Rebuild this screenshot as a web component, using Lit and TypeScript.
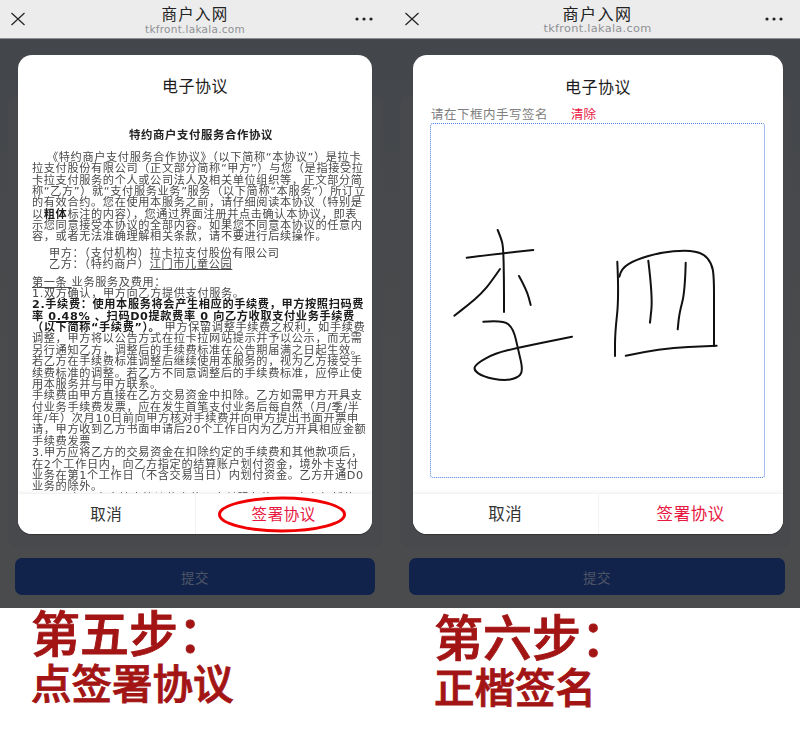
import { LitElement, html, css, svg } from "lit";
import { customElement } from "lit/decorators.js";

type Pt = [number, number];
const strokes: Pt[][] = [
  [[497.7, 230], [501, 238], [503.3, 247], [504, 280], [504, 312]],
  [[466.7, 257.7], [500, 253.5], [533.3, 250]],
  [[500, 269], [491, 282], [481.7, 293.3], [468, 305], [454.3, 315.7]],
  [[519, 276], [526.7, 290], [530.7, 305]],
  [[483.3, 321.7], [503.3, 320], [513.3, 328.3], [518.3, 350], [523.3, 371.7], [516.7, 378.3], [503.3, 380.7], [483.3, 376.7], [473.3, 370], [476.7, 363.3], [495, 353.3], [520, 347.3], [572, 336.7]],
  [[617.3, 261.7], [619, 296.7], [615, 333.3], [615, 356]],
  [[619.3, 276.7], [621, 268.3], [636.7, 259.3], [660, 252.7], [686.7, 250], [703.3, 253.3], [711.7, 263.3], [714, 276.7], [714, 310], [714, 346]],
  [[648.3, 260.7], [652.7, 296.7], [650, 322.7]],
  [[685.7, 262.7], [685, 291.7], [679.3, 313.3], [677.7, 329.3]],
  [[625.7, 355.7], [660, 348.3], [716.7, 345.7]],
];

function smooth(p: Pt[]): string {
  let d = `M${p[0][0]} ${p[0][1]}`;
  for (let i = 1; i < p.length - 1; i++) {
    const mx = (p[i][0] + p[i + 1][0]) / 2;
    const my = (p[i][1] + p[i + 1][1]) / 2;
    d += ` Q${p[i][0]} ${p[i][1]} ${mx} ${my}`;
  }
  const l = p[p.length - 1];
  return d + ` L${l[0]} ${l[1]}`;
}

const intro = [
  "拉支付股份有限公司（正文部分简称“甲方”）与您（是指接受拉",
  "卡拉支付服务的个人或公司法人及相关单位组织等，正文部分简",
  "称“乙方”）就“支付服务业务”服务（以下简称“本服务”）所订立",
  "的有效合约。您在使用本服务之前，请仔细阅读本协议（特别是",
];
const terms = [
  "调整，甲方将以公告方式在拉卡拉网站提示并予以公示，而无需",
  "另行通知乙方，调整后的手续费标准在公告期届满之日起生效。",
  "若乙方在手续费标准调整后继续使用本服务的，视为乙方接受手",
  "续费标准的调整。若乙方不同意调整后的手续费标准，应停止使",
  "用本服务并与甲方联系。",
  "手续费由甲方直接在乙方交易资金中扣除。乙方如需甲方开具支",
  "付业务手续费发票，应在发生首笔支付业务后每自然（月/季/半",
  "年/年）次月10日前向甲方核对手续费并向甲方提出书面开票申",
  "请，甲方收到乙方书面申请后20个工作日内为乙方开具相应金额",
  "手续费发票",
  "3.甲方应将乙方的交易资金在扣除约定的手续费和其他款项后，",
  "在2个工作日内，向乙方指定的结算账户划付资金，境外卡支付",
  "业务在第1个工作日（不含交易当日）内划付资金。乙方开通D0",
  "业务的除外。",
];

@customElement("app-root")
export class AppRoot extends LitElement {
  static styles = css`
    :host {
      display: block;
      width: 800px;
      height: 750px;
      overflow: hidden;
      background: #fff;
      font-family: "DejaVu Sans", "Noto Sans CJK SC", sans-serif;
    }
    .page { display: flex; align-items: flex-start; }
    .panel { display: flex; flex-direction: column; }
    .panel.left { width: 392px; }
    .panel.right { width: 408px; }
    .screen { display: flex; flex-direction: column; height: 608px; }

    .bar {
      height: 38px;
      flex: none;
      display: grid;
      grid-template-columns: 1fr auto 1fr;
      align-items: center;
      background: #ececec;
      border-bottom: 1px solid #8d8f92;
    }
    .left .bar { padding: 0 19px 0 11px; }
    .right .bar { padding: 0 17px 0 13px; }
    .bar svg { display: block; }
    .bar svg:last-child { justify-self: end; }
    .bar-title { text-align: center; }
    .left .bar-title { margin-left: 6px; }
    .right .bar-title { margin-left: 7px; }
    .bar-name {
      font-family: "Noto Sans CJK SC", sans-serif;
      font-size: 15.5px;
      line-height: 19px;
      letter-spacing: 1.2px;
      color: #222;
    }
    .right .bar-name { font-size: 16px; letter-spacing: 1.5px; }
    .bar-url { font-size: 10.5px; line-height: 12px; letter-spacing: .25px; color: #8f9194; }
    .right .bar-url { font-size: 11.3px; letter-spacing: .3px; }

    .stage {
      flex: 1;
      min-height: 0;
      position: relative;
      display: flex;
      flex-direction: column;
      align-items: center;
      padding-top: 16px;
      background: linear-gradient(#43464b, #4a4b4c 60%);
    }
    .stage::before {
      content: "";
      position: absolute;
      left: 8px;
      right: 9px;
      top: 58px;
      height: 450px;
      border-radius: 8px;
      background: #47494c;
    }

    .modal {
      position: relative;
      height: 479px;
      flex: none;
      display: flex;
      flex-direction: column;
      background: #fff;
      border-radius: 14px;
      overflow: hidden;
      box-shadow: 0 1px 1px rgba(0, 0, 0, .3);
    }
    .left .modal { width: 354px; margin-right: 2px; }
    .right .modal { width: 370px; margin-left: 4px; }
    .modal-title {
      flex: none;
      height: 62px;
      line-height: 62px;
      text-align: center;
      font-family: "Noto Sans CJK SC", sans-serif;
      font-size: 16px;
      letter-spacing: .5px;
      color: #1c1c1c;
    }
    .left .modal-title { line-height: 60px; }

    .doc {
      flex: 1;
      min-height: 0;
      overflow: hidden;
      padding: 0 0 0 14px;
      font-size: 11.2px;
      letter-spacing: .62px;
      line-height: 11.38px;
      color: #484848;
      white-space: nowrap;
      filter: blur(.3px);
    }
    .doc-title {
      height: 20px;
      line-height: 20px;
      margin: 8px 0 6.8px;
      padding-right: 2px;
      text-align: center;
      font-size: 11.4px;
      font-weight: 700;
      color: #222;
    }
    .indent { padding-left: 15px; }
    .tail { padding-left: 40px; }
    .party { padding-left: 17px; }
    .gap { margin-top: 5px; }
    .gap-s { margin-top: 6px; }
    b { color: #1a1a1a; }
    u { text-underline-offset: 1px; }

    .sign-head {
      flex: none;
      display: flex;
      gap: 23px;
      margin: -10px 0 0 18px;
      height: 14px;
      line-height: 14px;
      font-family: "Noto Sans CJK SC", sans-serif;
      font-size: 12.5px;
      letter-spacing: .5px;
      color: #808080;
    }
    .sign-head span + span { color: #e8173f; font-size: 12.5px; letter-spacing: 0; }
    .sign-wrap { flex: 1; min-height: 0; padding: 2px 0 0 17px; }
    .sign-box {
      width: 335px;
      height: 355px;
      box-sizing: border-box;
      border: 1px dotted #4c7fe8;
      border-radius: 3px;
    }
    .sign-box svg { display: block; width: 333px; height: 353px; }

    .foot {
      flex: none;
      position: relative;
      height: 41px;
      box-sizing: border-box;
      display: flex;
      background: #fff;
      border-top: 1px solid #f3f3f3;
      box-shadow: 0 -2px 2px rgba(0, 0, 0, .03);
      font-family: "Noto Sans CJK SC", sans-serif;
      font-size: 15.5px;
      letter-spacing: .6px;
    }
    .right .foot { font-size: 16.5px; }
    .foot div {
      flex: 1;
      position: relative;
      display: flex;
      align-items: center;
      justify-content: center;
      padding-bottom: 2px;
      color: #333;
    }
    .foot div + div { border-left: 1px solid #f3f3f3; color: #e8173f; }
    .ring { position: absolute; left: 21px; top: 2px; }

    .submit {
      flex: none;
      height: 37px;
      margin-top: 24px;
      display: flex;
      align-items: center;
      justify-content: center;
      position: relative;
      border-radius: 7px;
      background: #11234b;
      color: #4d5566;
      font-family: "Noto Sans CJK SC", sans-serif;
      font-size: 13.5px;
      letter-spacing: .5px;
    }
    .left .submit { width: 360px; margin-left: -2px; }
    .right .submit { width: 376px; margin-left: 2px; }

    .caption {
      display: flex;
      flex-direction: column;
      color: #a31515;
      font-family: "Noto Sans CJK SC", sans-serif;
      font-weight: 500;
      -webkit-text-stroke: .9px #a31515;
    }
    .left .caption { padding: 0 0 0 31px; }
    .right .caption { padding: 4px 0 0 42px; }
    .big { font-size: 49px; line-height: 46px; height: 46px; }
    .small { font-size: 40.5px; line-height: 40px; height: 40px; margin-top: 8px; }
  `;

  private bar() {
    return html`<div class="bar">
      <svg width="14" height="14" viewBox="0 0 14 14" fill="none" stroke="#222" stroke-width="1.2">
        <path d="M.5 1 13.5 13M13.5 1 .5 13" />
      </svg>
      <div class="bar-title">
        <div class="bar-name">商户入网</div>
        <div class="bar-url">tkfront.lakala.com</div>
      </div>
      <svg width="18" height="4" viewBox="0 0 18 4" fill="#222">
        <circle cx="2" cy="2" r="1.6" /><circle cx="9" cy="2" r="1.6" /><circle cx="16" cy="2" r="1.6" />
      </svg>
    </div>`;
  }

  private docBody() {
    return html`<div class="doc">
      <div class="doc-title">特约商户支付服务合作协议</div>
      <div class="indent">《特约商户支付服务合作协议》（以下简称“本协议”）是拉卡</div>
      ${intro.map((l) => html`<div>${l}</div>`)}
      <div>以<b>粗体</b>标注的内容），您通过界面注册并点击确认本协议，即表</div>
      <div>示您同意接受本协议的全部内容。如果您不同意本协议的任意内</div>
      <div>容，或者无法准确理解相关条款，请不要进行后续操作。</div>
      <div class="party gap">甲方：（支付机构）拉卡拉支付股份有限公司</div>
      <div class="party">乙方：（特约商户）<u>江门市儿童公园</u></div>
      <div class="gap-s"><u>第一条 </u>业务服务及费用：</div>
      <div>1.双方确认，甲方向乙方提供支付服务。</div>
      <div><b>2.手续费：使用本服务将会产生相应的手续费，甲方按照扫码费</b></div>
      <div><b>率 <u>0.48%</u> 、扫码D0提款费率 <u>0</u> 向乙方收取支付业务手续费</b></div>
      <div><b>（以下简称“手续费”）。</b> 甲方保留调整手续费之权利，如手续费</div>
      ${terms.map((l) => html`<div>${l}</div>`)}
      <div class="tail">如乙方未按本协议约定使用支付服务的，甲方有权暂停</div>
    </div>`;
  }

  private foot(ring: boolean) {
    return html`<div class="foot">
      <div>取消</div>
      <div>
        ${ring
          ? html`<svg class="ring" width="130" height="37" viewBox="0 0 130 37" fill="none">
              <ellipse cx="65" cy="18.5" rx="62.5" ry="16.5" stroke="#f00000" stroke-width="3" />
            </svg>`
          : ""}
        签署协议
      </div>
    </div>`;
  }

  render() {
    return html`<div class="page">
      <section class="panel left">
        <div class="screen">
          ${this.bar()}
          <div class="stage">
            <div class="modal">
              <div class="modal-title">电子协议</div>
              ${this.docBody()} ${this.foot(true)}
            </div>
            <div class="submit">提交</div>
          </div>
        </div>
        <div class="caption">
          <div class="big">第五步：</div>
          <div class="small">点签署协议</div>
        </div>
      </section>
      <section class="panel right">
        <div class="screen">
          ${this.bar()}
          <div class="stage">
            <div class="modal">
              <div class="modal-title">电子协议</div>
              <div class="sign-head"><span>请在下框内手写签名</span><span>清除</span></div>
              <div class="sign-wrap">
                <div class="sign-box">
                  <svg viewBox="431 124 333 353" fill="none" stroke="#111" stroke-width="2" stroke-linecap="round" stroke-linejoin="round">
                    ${strokes.map((s) => svg`<path d=${smooth(s)} />`)}
                  </svg>
                </div>
              </div>
              ${this.foot(false)}
            </div>
            <div class="submit">提交</div>
          </div>
        </div>
        <div class="caption">
          <div class="big">第六步：</div>
          <div class="small">正楷签名</div>
        </div>
      </section>
    </div>`;
  }
}
